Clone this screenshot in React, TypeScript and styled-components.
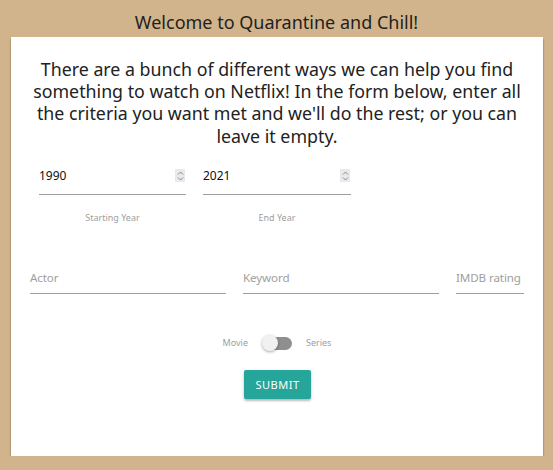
import React from "react";
import styled, { createGlobalStyle } from "styled-components";

const Global = createGlobalStyle`
  html, body { margin: 0; padding: 0; }
  body {
    background: #d2b48c;
    font-family: "Noto Sans", "Open Sans", sans-serif;
    color: #222;
  }
`;

const Title = styled.h1`
  margin: 0;
  height: 37px;
  padding-top: 11px;
  box-sizing: border-box;
  text-align: center;
  font-size: 18px;
  font-weight: 400;
  line-height: 22px;
  color: #1f1f1f;
`;

const Card = styled.main`
  margin: 0 10px 0 11px;
  height: 419px;
  background: #fff;
  box-shadow: 0 2px 2px rgba(0, 0, 0, 0.45);
  box-sizing: border-box;
  padding-top: 21px;
  display: flex;
  flex-direction: column;
`;

const Intro = styled.p`
  margin: 0 14px;
  text-align: center;
  font-size: 17.8px;
  line-height: 22.2px;
  color: #222;
`;

const YearRow = styled.div`
  display: flex;
  gap: 17px;
  margin-top: 18px;
  padding-left: 28px;
`;

const YearField = styled.div<{ $w: number }>`
  width: ${(p) => p.$w}px;
  display: flex;
  flex-direction: column;
  align-items: center;
`;

const NumberBox = styled.div`
  width: 100%;
  height: 30px;
  padding-bottom: 7px;
  border-bottom: 1px solid #9e9e9e;
  display: flex;
  align-items: center;
  justify-content: space-between;
  box-sizing: border-box;
  font-size: 12px;
  color: #111;
`;

const Spinner = styled.span`
  width: 10px;
  height: 13px;
  margin-right: 1px;
  background: #e9e9ed;
  display: flex;
  align-items: center;
  justify-content: center;
`;

const SmallLabel = styled.span`
  margin-top: 16px;
  font-size: 9px;
  color: #9e9e9e;
`;

const TextRow = styled.div`
  display: flex;
  gap: 17px;
  margin-top: 41px;
  padding-left: 19px;
`;

const TextField = styled.div<{ $w: number }>`
  width: ${(p) => p.$w}px;
  height: 29px;
  padding-bottom: 3px;
  border-bottom: 1px solid #9e9e9e;
  box-sizing: border-box;
  display: flex;
  align-items: center;
  font-size: 11.6px;
  letter-spacing: -0.1px;
  color: #9e9e9e;
  white-space: nowrap;
  overflow: hidden;
`;

const SwitchRow = styled.div`
  display: flex;
  align-items: center;
  justify-content: center;
  gap: 14px;
  margin-top: 42px;
  font-size: 9px;
  color: #9e9e9e;
`;

const Track = styled.span`
  position: relative;
  width: 30px;
  height: 14px;
  display: inline-block;
`;

const Bar = styled.span`
  position: absolute;
  left: 4px;
  right: 0;
  top: 1px;
  height: 13px;
  border-radius: 7px;
  background: #8f8f8f;
`;

const Knob = styled.span`
  position: absolute;
  left: 0;
  top: -1px;
  width: 16px;
  height: 16px;
  border-radius: 50%;
  background: #f1f1f1;
  box-shadow: 0 1px 3px rgba(0, 0, 0, 0.35);
`;

const Submit = styled.button`
  align-self: center;
  margin-top: 20px;
  margin-left: 1px;
  width: 67px;
  height: 29px;
  border: none;
  border-radius: 2px;
  background: #26a69a;
  color: #fff;
  font-family: inherit;
  font-size: 11px;
  letter-spacing: 0.5px;
  box-shadow: 0 2px 2px rgba(0, 0, 0, 0.2), 0 1px 4px rgba(0, 0, 0, 0.12);
  padding: 0;
`;

const Chevrons = () => (
  <svg width="7" height="10" viewBox="0 0 7 10" fill="none" stroke="#8a8a8a" strokeWidth="1">
    <path d="M1 3.5 L3.5 1 L6 3.5" />
    <path d="M1 6.5 L3.5 9 L6 6.5" />
  </svg>
);

export default function App() {
  return (
    <>
      <Global />
      <Title>Welcome to Quarantine and Chill!</Title>
      <Card>
        <Intro>
          There are a bunch of different ways we can help you find something to watch on
          Netflix! In the form below, enter all the criteria you want met and we'll do the
          rest; or you can leave it empty.
        </Intro>
        <YearRow>
          <YearField $w={147}>
            <NumberBox>
              1990
              <Spinner>
                <Chevrons />
              </Spinner>
            </NumberBox>
            <SmallLabel>Starting Year</SmallLabel>
          </YearField>
          <YearField $w={148}>
            <NumberBox>
              2021
              <Spinner>
                <Chevrons />
              </Spinner>
            </NumberBox>
            <SmallLabel>End Year</SmallLabel>
          </YearField>
        </YearRow>
        <TextRow>
          <TextField $w={196}>Actor</TextField>
          <TextField $w={196}>Keyword</TextField>
          <TextField $w={68}>IMDB rating</TextField>
        </TextRow>
        <SwitchRow>
          <span>Movie</span>
          <Track>
            <Bar />
            <Knob />
          </Track>
          <span>Series</span>
        </SwitchRow>
        <Submit>SUBMIT</Submit>
      </Card>
    </>
  );
}
